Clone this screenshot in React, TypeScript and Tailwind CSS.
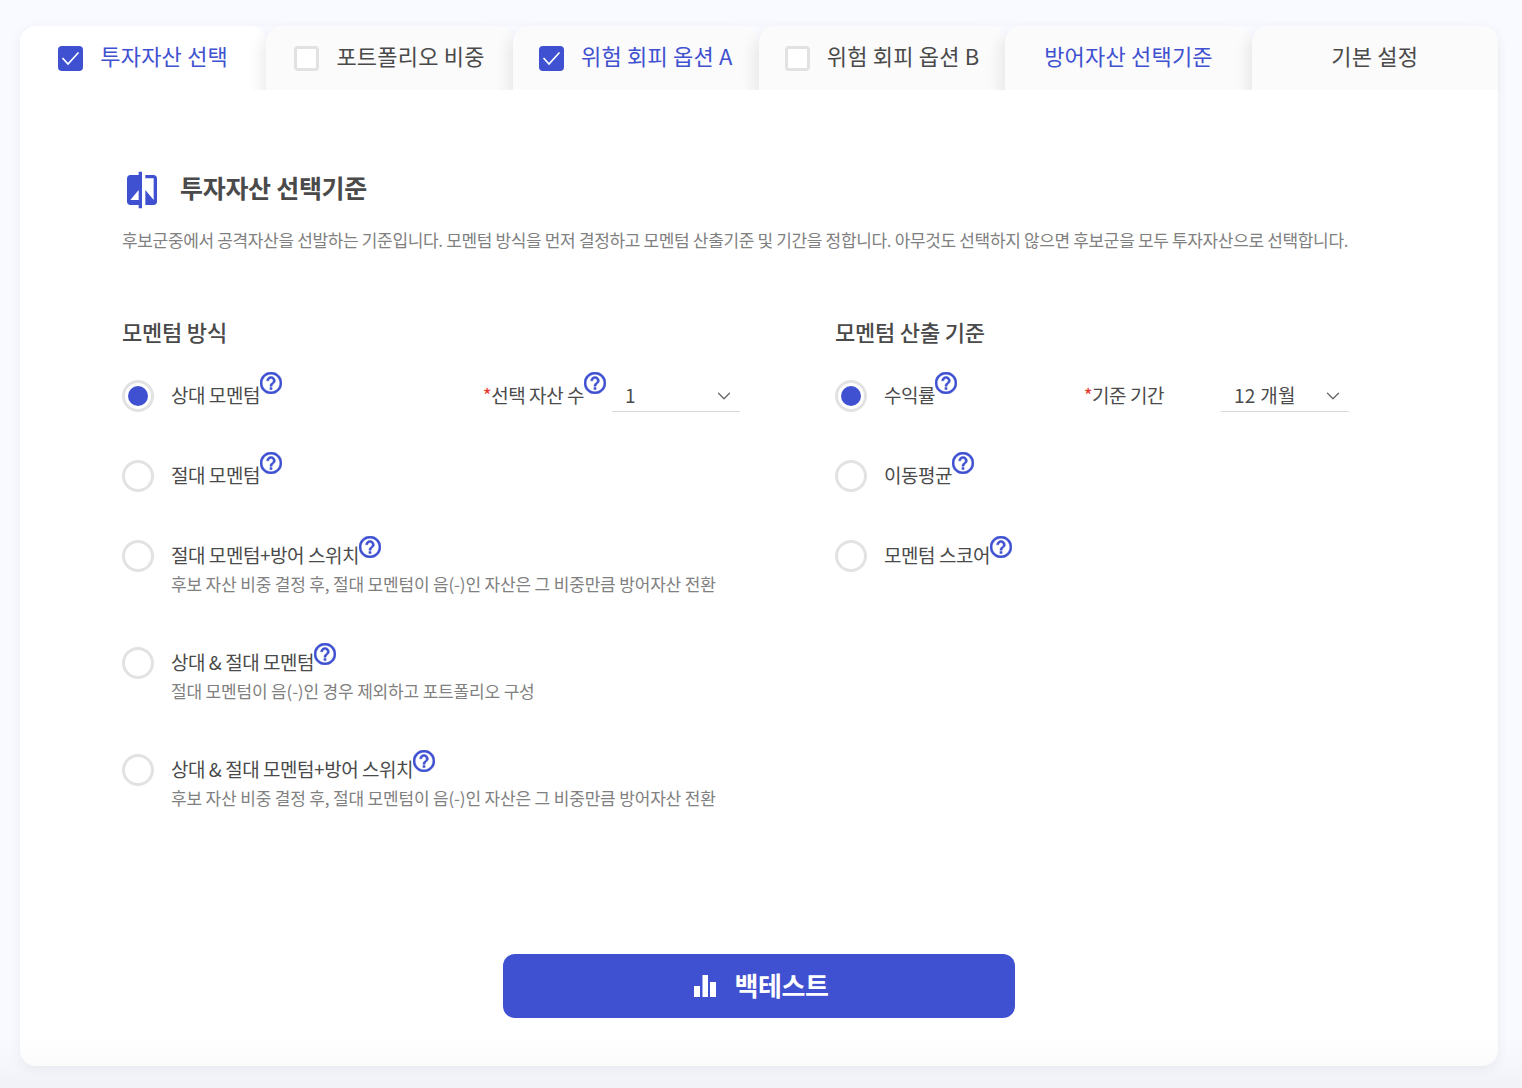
import React from "react";
import { ChevronDown } from "lucide-react";

type TabItem = { label: string; check?: boolean; blue?: boolean; active?: boolean };

const tabs: TabItem[] = [
  { label: "투자자산 선택", check: true, blue: true, active: true },
  { label: "포트폴리오 비중", check: false },
  { label: "위험 회피 옵션 A", check: true, blue: true },
  { label: "위험 회피 옵션 B", check: false },
  { label: "방어자산 선택기준", blue: true },
  { label: "기본 설정" },
];

const leftOptions = [
  { label: "상대 모멘텀", selected: true, rowClass: "h-[32px]" },
  { label: "절대 모멘텀", rowClass: "h-[32px] mt-[48px]" },
  {
    label: "절대 모멘텀+방어 스위치",
    sub: "후보 자산 비중 결정 후, 절대 모멘텀이 음(-)인 자산은 그 비중만큼 방어자산 전환",
    rowClass: "h-[59px] mt-[48px]",
    lowHelp: true,
  },
  {
    label: "상대 & 절대 모멘텀",
    sub: "절대 모멘텀이 음(-)인 경우 제외하고 포트폴리오 구성",
    rowClass: "h-[59px] mt-[48px]",
    lowHelp: true,
  },
  {
    label: "상대 & 절대 모멘텀+방어 스위치",
    sub: "후보 자산 비중 결정 후, 절대 모멘텀이 음(-)인 자산은 그 비중만큼 방어자산 전환",
    rowClass: "h-[59px] mt-[48px]",
    lowHelp: true,
  },
];

const rightOptions = [
  { label: "수익률", selected: true, rowClass: "h-[32px]" },
  { label: "이동평균", rowClass: "h-[32px] mt-[48px]" },
  { label: "모멘텀 스코어", rowClass: "h-[32px] mt-[48px]", lowHelp: true },
];

function Help({ low }: { low?: boolean }) {
  return (
    <svg
      width="22"
      height="22"
      viewBox="2 2 20 20"
      className={`shrink-0 ${low ? "-mt-[18px]" : "-mt-[26px]"}`}
      fill="#3f51d0"
      stroke="#3f51d0"
      strokeWidth="0.4"
    >
      <path d="M11 18h2v-2h-2v2zm1-16C6.480 2 2 6.480 2 12s4.480 10 10 10 10-4.480 10-10S17.520 2 12 2zm0 18c-4.410 0-8-3.590-8-8s3.590-8 8-8 8 3.590 8 8-3.590 8-8 8zm0-14c-2.210 0-4 1.790-4 4h2c0-1.100.9-2 2-2s2 .9 2 2c0 2-3 1.750-3 5h2c0-2.250 3-2.500 3-5 0-2.210-1.790-4-4-4z" />
    </svg>
  );
}

function Radio({ selected }: { selected?: boolean }) {
  return (
    <span className="flex h-[32px] w-[32px] shrink-0 items-center justify-center rounded-full border-[3px] border-[#e2e2e2] bg-white">
      {selected && <span className="h-[20px] w-[20px] rounded-full bg-[#3f51d0]" />}
    </span>
  );
}

function Check({ on }: { on?: boolean }) {
  if (!on) {
    return <span className="h-[25px] w-[25px] shrink-0 rounded-[4px] border-[3px] border-[#e2e2e2] bg-white" />;
  }
  return (
    <span className="flex h-[25px] w-[25px] shrink-0 items-center justify-center rounded-[4px] bg-[#3f51d0]">
      <svg width="19" height="15" viewBox="0 0 19 15" fill="none">
        <path d="M1.500 7l5.500 6L17.500 1.500" stroke="#fff" strokeWidth="1.700" />
      </svg>
    </span>
  );
}

function Option({
  label,
  sub,
  selected,
  rowClass,
  lowHelp,
}: {
  label: string;
  sub?: string;
  selected?: boolean;
  rowClass: string;
  lowHelp?: boolean;
}) {
  return (
    <div className={`flex gap-[17px] ${rowClass}`}>
      <Radio selected={selected} />
      <div className="min-w-0">
        <div className="flex h-[32px] items-center">
          <span className="mb-[2px] text-[19px] leading-[32px] tracking-[-0.45px] text-[#4a4a4a]">{label}</span>
          <Help low={lowHelp} />
        </div>
        {sub && <p className="text-[17px] leading-[24px] tracking-[-0.17px] whitespace-nowrap text-[#808080]">{sub}</p>}
      </div>
    </div>
  );
}

function SelectBox({ value, className }: { value: string; className?: string }) {
  return (
    <div
      className={`flex h-[32px] w-[128px] items-center justify-between border-b border-[#d9d9d9] pr-[5px] pl-[13px] ${className ?? ""}`}
    >
      <span className="text-[19px] tracking-[0.3px] text-[#4a4a4a]">{value}</span>
      <ChevronDown size={22} strokeWidth={1.4} color="#666" />
    </div>
  );
}

function Tab({ tab, first }: { tab: TabItem; first: boolean }) {
  return (
    <div
      className={`relative flex h-[64px] flex-1 items-center justify-center gap-[17px] rounded-t-[16px] ${
        tab.active ? "bg-white" : "bg-[#fbfbfb]"
      } ${first ? "" : "shadow-[-6px_8px_14px_rgba(0,0,0,0.07)]"}`}
    >
      {tab.check !== undefined && <Check on={tab.check} />}
      <span className={`mb-[5px] text-[22px] tracking-[0.2px] whitespace-nowrap ${tab.blue ? "text-[#3f51d0]" : "text-[#4a4a4a]"}`}>
        {tab.label}
      </span>
    </div>
  );
}

export default function App() {
  return (
    <div
      className="relative min-h-[1088px] bg-[#f9faff] pt-[26px] pr-[24px] pb-[22px] pl-[20px]"
      style={{ fontFamily: '"Noto Sans CJK KR", "Noto Sans", sans-serif' }}
    >
      <div className="h-[1040px] rounded-[16px] shadow-[0_3px_12px_rgba(40,50,90,0.07)]">
        <div className="flex">
          {tabs.map((tab, i) => (
            <Tab key={tab.label} tab={tab} first={i === 0} />
          ))}
        </div>

        <div className="relative h-[976px] rounded-b-[16px] bg-white px-[102px] pt-[80px]">
          <div className="flex h-[36px] items-center gap-[18px]">
            <svg width="40" height="40" viewBox="0 0 24 24" className="mt-[3px] shrink-0" fill="#3f51d0">
              <path d="M10 3H5c-1.100 0-2 .9-2 2v14c0 1.100.9 2 2 2h5v2h2V1h-2v2zm0 15H5l5-6v6zm9-15h-5v2h5v13l-5-6v9h5c1.100 0 2-.9 2-2V5c0-1.100-.9-2-2-2z" />
            </svg>
            <h1 className="text-[25px] font-semibold tracking-[-0.3px] text-[#4a4a4a]">투자자산 선택기준</h1>
          </div>
          <p className="mt-[20px] text-[17px] leading-[28px] tracking-[-0.345px] whitespace-nowrap text-[#808080]">
            후보군중에서 공격자산을 선발하는 기준입니다. 모멘텀 방식을 먼저 결정하고 모멘텀 산출기준 및 기간을 정합니다. 아무것도 선택하지 않으면 후보군을 모두 투자자산으로 선택합니다.
          </p>

          <div className="mt-[62px] grid grid-cols-[618px_514px] gap-x-[95px]">
            <div>
              <h2 className="text-[22px] leading-[30px] font-medium tracking-[-0.2px] text-[#4a4a4a]">모멘텀 방식</h2>
              <div className="relative mt-[34px]">
                {leftOptions.map((o) => (
                  <Option key={o.label + (o.sub ?? "")} {...o} />
                ))}
                <div className="absolute top-0 right-0 flex items-center">
                  <span className="mb-[2px] text-[19px] tracking-[-0.45px] text-[#4a4a4a]">
                    <span className="text-[#e5372a]">*</span>선택 자산 수
                  </span>
                  <Help />
                  <SelectBox value="1" className="ml-[6px]" />
                </div>
              </div>
            </div>
            <div>
              <h2 className="text-[22px] leading-[30px] font-medium tracking-[-0.2px] text-[#4a4a4a]">모멘텀 산출 기준</h2>
              <div className="relative mt-[34px]">
                {rightOptions.map((o) => (
                  <Option key={o.label} {...o} />
                ))}
                <div className="absolute top-0 right-0 flex items-center gap-[57px]">
                  <span className="mb-[2px] text-[19px] tracking-[-0.45px] text-[#4a4a4a]">
                    <span className="text-[#e5372a]">*</span>기준 기간
                  </span>
                  <SelectBox value="12 개월" />
                </div>
              </div>
            </div>
          </div>

          <div className="mt-[141px] flex justify-center">
            <button className="flex h-[64px] w-[512px] items-center justify-center gap-[18px] rounded-[12px] bg-[#3f51d0] pl-[5px]">
              <svg width="22" height="22" viewBox="0 0 22 22" fill="#fff">
                <path d="M0 11h6v11H0zM8.500 0h5.500v22H8.500zM16 7h6v15h-6z" />
              </svg>
              <span className="mb-[4px] text-[26px] font-bold tracking-[-0.4px] text-white">백테스트</span>
            </button>
          </div>
        </div>
      </div>
      <div className="pointer-events-none absolute right-0 bottom-0 left-0 h-[50px] bg-gradient-to-b from-transparent to-black/[0.03]" />
    </div>
  );
}
